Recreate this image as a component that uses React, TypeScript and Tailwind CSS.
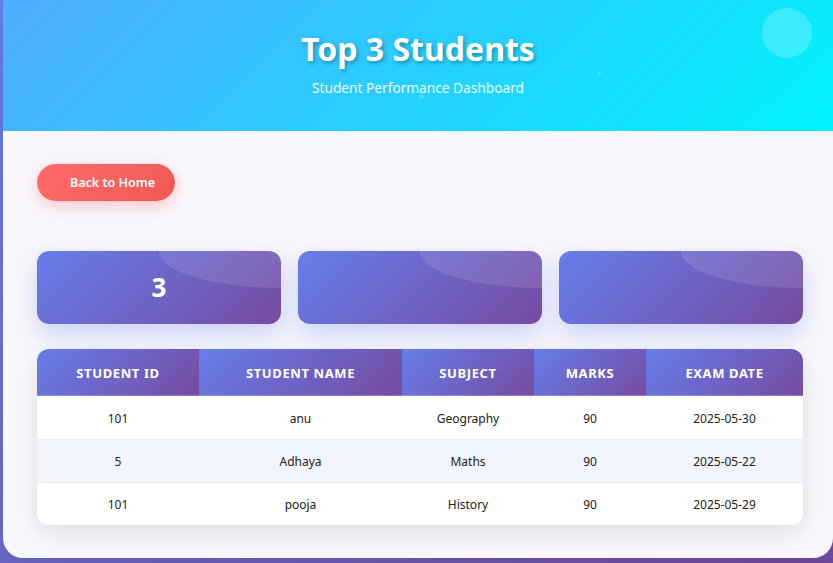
import React from "react";

const rows = [
  { id: "101", name: "anu", subject: "Geography", marks: "90", date: "2025-05-30" },
  { id: "5", name: "Adhaya", subject: "Maths", marks: "90", date: "2025-05-22" },
  { id: "101", name: "pooja", subject: "History", marks: "90", date: "2025-05-29" },
];

const cols = [
  { label: "Student ID", w: "w-[162px]" },
  { label: "Student Name", w: "w-[203px]" },
  { label: "Subject", w: "w-[132px]" },
  { label: "Marks", w: "w-[112px]" },
  { label: "Exam Date", w: "w-[157px]" },
];

function StatCard({ value }: { value?: string }) {
  return (
    <div className="relative flex-1 h-[73px] rounded-[12px] overflow-hidden bg-[linear-gradient(135deg,#667eea_0%,#764ba2_100%)] shadow-[0_10px_25px_rgba(102,126,234,0.3)] flex items-center justify-center">
      <div className="absolute left-1/2 top-[-50%] w-full h-full rounded-[50%] bg-white/10" />
      {value && <span className="relative text-white font-bold text-[26px] leading-none -mt-[1px]">{value}</span>}
    </div>
  );
}

export default function App() {
  return (
    <div
      className="w-[833px] h-[563px] overflow-hidden bg-[linear-gradient(135deg,#667eea_0%,#764ba2_100%)] pl-[3px]"
      style={{ fontFamily: '"Noto Sans", "Open Sans", sans-serif' }}
    >
      <div className="w-[830px] h-[558px] rounded-b-[20px] bg-[#f8f7fc] overflow-hidden flex flex-col shadow-[0_20px_40px_rgba(0,0,0,0.1)]">
        <div className="relative h-[131px] shrink-0 bg-[linear-gradient(135deg,#4facfe_0%,#00f2fe_100%)] flex flex-col items-center pt-[29px]">
          <div className="absolute left-[759px] top-[8px] w-[50px] h-[50px] rounded-full bg-white/20" />
          <div className="absolute left-[594px] top-[71px] w-[4px] h-[4px] rounded-full bg-white/20" />
          <div className="absolute left-[416px] top-[94px] w-[5px] h-[5px] rounded-full bg-white/20" />
          <h1 className="relative text-white font-bold text-[32px] leading-[40px] [text-shadow:2px_2px_4px_rgba(0,0,0,0.3)]">
            Top 3 Students
          </h1>
          <p className="relative mt-[9px] text-white/90 text-[13.7px] leading-[20px]">Student Performance Dashboard</p>
        </div>

        <div className="pl-[34px] pr-[30px] pt-[33px] flex flex-col">
          <div className="flex">
            <button className="h-[37px] pl-[33px] pr-[20px] rounded-full bg-[linear-gradient(135deg,#ff6b6b_0%,#ee5a52_100%)] text-white text-[12.5px] font-semibold pt-[2px] shadow-[0_5px_15px_rgba(255,107,107,0.35)]">
              Back to Home
            </button>
          </div>

          <div className="mt-[50px] flex gap-[17px]">
            <StatCard value="3" />
            <StatCard />
            <StatCard />
          </div>

          <div className="mt-[25px] rounded-[12px] overflow-hidden bg-white shadow-[0_8px_25px_rgba(0,0,0,0.1)]">
            <table className="w-full border-collapse">
              <thead>
                <tr>
                  {cols.map((c) => (
                    <th
                      key={c.label}
                      className={`${c.w} h-[47px] p-0 pt-[3px] bg-[linear-gradient(135deg,#667eea_0%,#764ba2_100%)] border-b-2 border-white/20 text-white text-[13px] font-bold uppercase tracking-[0.6px] text-center`}
                    >
                      {c.label}
                    </th>
                  ))}
                </tr>
              </thead>
              <tbody>
                {rows.map((r, i) => (
                  <tr key={i} className={i === 1 ? "bg-[#f3f5fd]" : "bg-white"}>
                    {[r.id, r.name, r.subject, r.marks, r.date].map((v, j) => (
                      <td
                        key={j}
                        className={`h-[43px] p-0 pt-[3px] text-center text-[12px] text-[#222] ${i < 2 ? "border-b border-[#ececf2]" : ""}`}
                      >
                        {v}
                      </td>
                    ))}
                  </tr>
                ))}
              </tbody>
            </table>
          </div>
        </div>
      </div>
    </div>
  );
}
